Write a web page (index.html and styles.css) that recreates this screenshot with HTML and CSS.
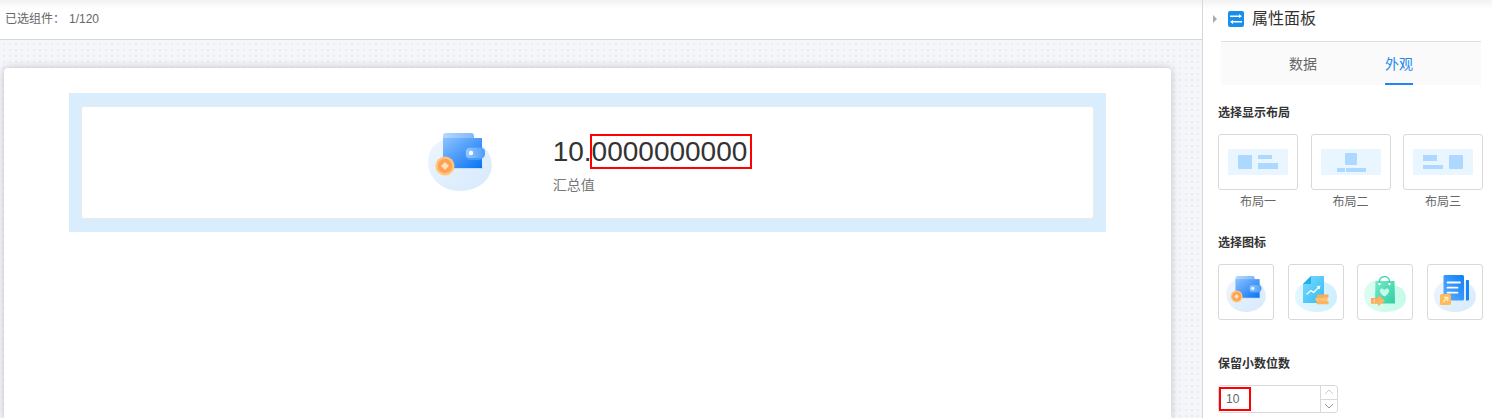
FILE: index.html
```html
<!DOCTYPE html>
<html lang="zh-CN">
<head>
    <meta charset="UTF-8">
    <meta name="viewport" content="width=device-width, initial-scale=1.0">
    <title>属性面板</title>
    <link rel="stylesheet" href="styles.css">
</head>
<body>

    <!-- shared icon shapes -->
    <svg class="defs" width="0" height="0" aria-hidden="true">
        <defs>
            <linearGradient id="blob-blue" x1="0" y1="0" x2="1" y2="1">
                <stop offset="0" stop-color="#eff6fe"/>
                <stop offset="1" stop-color="#d5e9fc"/>
            </linearGradient>
            <linearGradient id="blob-cyan" x1="0" y1="0" x2="1" y2="0">
                <stop offset="0" stop-color="#e3f7fe"/>
                <stop offset="1" stop-color="#cdeffe"/>
            </linearGradient>
            <linearGradient id="blob-green" x1="0" y1="0" x2="1" y2="0">
                <stop offset="0" stop-color="#dcfcf2"/>
                <stop offset="1" stop-color="#c5fbe8"/>
            </linearGradient>
            <linearGradient id="blue" x1="0" y1="0" x2="1" y2="1">
                <stop offset="0" stop-color="#8cc2ff"/>
                <stop offset="1" stop-color="#0873f4"/>
            </linearGradient>
            <linearGradient id="flap" x1="0" y1="0" x2="1" y2="0">
                <stop offset="0" stop-color="#b4d8ff"/>
                <stop offset="1" stop-color="#7fb8fb"/>
            </linearGradient>
            <linearGradient id="strap" x1="0" y1="0" x2="1" y2="0">
                <stop offset="0" stop-color="#98c9ff"/>
                <stop offset="1" stop-color="#4c9cf8"/>
            </linearGradient>
            <linearGradient id="cyan" x1="0" y1="0" x2="1" y2="1">
                <stop offset="0" stop-color="#7bdcff"/>
                <stop offset="1" stop-color="#36b9f5"/>
            </linearGradient>
            <linearGradient id="green" x1="0" y1="0" x2="1" y2="1">
                <stop offset="0" stop-color="#76e8c8"/>
                <stop offset="1" stop-color="#30cfa3"/>
            </linearGradient>
            <linearGradient id="paper" x1="1" y1="0" x2="0" y2="1">
                <stop offset="0" stop-color="#0a80fc"/>
                <stop offset="1" stop-color="#65aefc"/>
            </linearGradient>
            <linearGradient id="orange" x1="0" y1="0" x2="1" y2="1">
                <stop offset="0" stop-color="#ff9f55"/>
                <stop offset="1" stop-color="#ffc06b"/>
            </linearGradient>
        </defs>

        <symbol id="icon-wallet" viewBox="0 0 64 58">
            <path fill="url(#blob-blue)" d="M0 29C0 15 9 7 22 5C38 3 53 8 60 19C64 26 65 34 62 41C57 52 45 58 31 58C13 58 0 44 0 29Z"/>
            <path fill="url(#flap)" d="M15 10V3Q15 0 18 0H43Q46 0 46 3V10Z"/>
            <path fill="#9ecbfb" opacity=".5" d="M15 34H55V36H15Z"/>
            <path fill="url(#blue)" d="M15 5H54V35H15Z"/>
            <rect x="37" y="14" width="19" height="13" rx="5" fill="#5ea9fa" opacity=".6"/>
            <rect x="38" y="15" width="19" height="10" rx="4" fill="url(#strap)"/>
            <circle cx="43" cy="20" r="2.2" fill="#fff"/>
            <circle cx="17" cy="33" r="9.5" fill="#ffc57b"/>
            <circle cx="17" cy="33" r="7.2" fill="#ffa153"/>
            <path fill="#ffe0bc" d="M17 29L21 33L17 37L13 33Z"/>
        </symbol>

        <symbol id="icon-report" viewBox="0 0 42 36">
            <path fill="url(#blob-cyan)" d="M0 21C0 10 10 4 22 5C33 5 42 11 42 21C42 30 33 36 22 36C10 36 0 30 0 21Z"/>
            <path fill="url(#cyan)" d="M16 0H29V27H8V8Z"/>
            <path fill="#22aee9" d="M16 0V8H8Z"/>
            <path fill="none" stroke="#fff" stroke-width="1.2" stroke-linecap="round" stroke-linejoin="round" d="M12 18L16 14.500L18.500 16.500L24 11"/>
            <path fill="#fff" d="M21.500 10.500L25.500 9.500L24.500 13.500Z"/>
            <rect x="22" y="18.500" width="11.500" height="3.200" rx=".6" fill="#ffab52"/>
            <rect x="20.500" y="21.700" width="12" height="3.200" rx=".6" fill="#ffc173"/>
            <rect x="21.500" y="24.900" width="12" height="3.400" rx=".6" fill="#ffb45d"/>
        </symbol>

        <symbol id="icon-bag" viewBox="0 0 42 36">
            <path fill="url(#blob-green)" d="M0 19C0 10 6 4 15 4C23 4 26 8 33 10C39 12 42 17 42 22C42 31 33 36 21 36C8 36 0 29 0 19Z"/>
            <path fill="url(#green)" d="M11.500 5H30.500L31 27.500H11Z"/>
            <path fill="none" stroke="#3dcea8" stroke-width="1.300" d="M15.500 8V5.500C15.500 -1 25.500 -1 25.500 5.500V8"/>
            <circle cx="15.500" cy="8" r="1.200" fill="#fff"/>
            <circle cx="25.500" cy="8" r="1.200" fill="#fff"/>
            <path fill="#c3fbea" d="M20.500 20.500C12.500 15.500 16.500 9.500 20.500 14C24.500 9.500 28.500 15.500 20.500 20.500Z"/>
            <path fill="url(#orange)" d="M7 22H14V19L21 24.800L14 30.500V27.800H7Z"/>
            <path fill="#ffd9ae" d="M9.500 23.500H10.800V26.300H9.500Z"/>
        </symbol>

        <symbol id="icon-order" viewBox="0 0 42 36">
            <path fill="url(#blob-blue)" d="M0 19C0 9 10 3 21 4C34 4 42 11 42 20C42 30 32 36 21 36C8 36 0 29 0 19Z"/>
            <rect x="9.500" y="-1" width="20.500" height="25.500" rx="1.500" fill="url(#paper)"/>
            <path fill="#1685fa" d="M32 4H34Q35 4 35 5V23.500Q35 24.500 34 24.500H32Z"/>
            <path fill="none" stroke="#fff" stroke-width="1.800" stroke-linecap="round" d="M13.500 6.500H26M13.500 11.700H23.500M13.500 16.700H23.500"/>
            <rect x="6" y="18" width="11" height="11" rx="1.500" fill="#ffbb55"/>
            <path fill="none" stroke="#fff1d8" stroke-width="1.200" d="M9 26L13.500 21.500M10 21.300H13.800V25.200"/>
        </symbol>
    </svg>

    <div class="app">
        <main class="workspace">
            <header class="toolbar">
                <span>已选组件：</span>
                <span>1/120</span>
            </header>

            <div class="canvas">
                <div class="sheet">
                    <section class="widget">
                        <div class="card">
                            <svg class="card-icon"><use href="#icon-wallet"/></svg>
                            <div class="card-body">
                                <div class="card-value">10.<span class="mark">0000000000</span></div>
                                <div class="card-label">汇总值</div>
                            </div>
                        </div>
                    </section>
                </div>
            </div>
        </main>

        <aside class="panel">
            <header class="panel-head">
                <button class="collapse" type="button" aria-label="收起"></button>
                <svg class="panel-icon" viewBox="0 0 16 16">
                    <rect width="16" height="16" rx="2" fill="#168eea"/>
                    <path fill="#fff" d="M2 4.500H11V3L14 5.200L11 7V6H2ZM14 11.500H5V13L2 10.800L5 9V10H14Z"/>
                </svg>
                <h1>属性面板</h1>
            </header>

            <nav class="tabs">
                <button class="tab" type="button">数据</button>
                <button class="tab active" type="button">外观</button>
            </nav>

            <fieldset class="group">
                <legend>选择显示布局</legend>
                <div class="options">
                    <label class="option">
                        <input type="radio" name="layout" value="1">
                        <span class="tile tile-wide">
                            <svg class="layout" viewBox="0 0 60 26">
                                <rect width="60" height="26" rx="1" fill="#e9f5ff"/>
                                <g fill="#add8ff">
                                    <rect x="10" y="6" width="14" height="14" rx="1"/>
                                    <rect x="30" y="6" width="14" height="4"/>
                                    <rect x="30" y="14" width="20" height="6"/>
                                </g>
                            </svg>
                        </span>
                        布局一
                    </label>
                    <label class="option">
                        <input type="radio" name="layout" value="2">
                        <span class="tile tile-wide">
                            <svg class="layout" viewBox="0 0 60 26">
                                <rect width="60" height="26" rx="1" fill="#e9f5ff"/>
                                <g fill="#add8ff">
                                    <rect x="24" y="4" width="12" height="12" rx="1"/>
                                    <rect x="16" y="19" width="8" height="4"/>
                                    <rect x="25" y="19" width="20" height="4"/>
                                </g>
                            </svg>
                        </span>
                        布局二
                    </label>
                    <label class="option">
                        <input type="radio" name="layout" value="3">
                        <span class="tile tile-wide">
                            <svg class="layout" viewBox="0 0 60 26">
                                <rect width="60" height="26" rx="1" fill="#e9f5ff"/>
                                <g fill="#add8ff">
                                    <rect x="10" y="6" width="14" height="6"/>
                                    <rect x="10" y="16" width="20" height="4"/>
                                    <rect x="36" y="6" width="14" height="14" rx="1"/>
                                </g>
                            </svg>
                        </span>
                        布局三
                    </label>
                </div>
            </fieldset>

            <fieldset class="group group-icons">
                <legend>选择图标</legend>
                <div class="options">
                    <label class="option">
                        <input type="radio" name="icon" value="wallet" aria-label="wallet">
                        <span class="tile"><svg class="picto"><use href="#icon-wallet"/></svg></span>
                    </label>
                    <label class="option">
                        <input type="radio" name="icon" value="report" aria-label="report">
                        <span class="tile"><svg class="picto"><use href="#icon-report"/></svg></span>
                    </label>
                    <label class="option">
                        <input type="radio" name="icon" value="bag" aria-label="bag">
                        <span class="tile"><svg class="picto"><use href="#icon-bag"/></svg></span>
                    </label>
                    <label class="option">
                        <input type="radio" name="icon" value="order" aria-label="order">
                        <span class="tile"><svg class="picto"><use href="#icon-order" overflow="visible"/></svg></span>
                    </label>
                </div>
            </fieldset>

            <div class="group group-number">
                <label class="group-title" for="digits">保留小数位数</label>
                <div class="stepper">
                    <input id="digits" type="number" value="10" min="0" max="10">
                    <div class="steps">
                        <button class="step" type="button" aria-label="增加" disabled>
                            <svg viewBox="0 0 10 6"><path d="M1 5L5 1L9 5"/></svg>
                        </button>
                        <button class="step" type="button" aria-label="减少">
                            <svg viewBox="0 0 10 6"><path d="M1 1L5 5L9 1"/></svg>
                        </button>
                    </div>
                </div>
            </div>
        </aside>
    </div>

</body>
</html>
```
FILE: styles.css
```css
*,
*::after {
    box-sizing: border-box;
}

body {
    margin: 0;
    font-family: "Liberation Sans", "Noto Sans CJK SC", sans-serif;
    font-size: 12px;
    line-height: 20px;
    color: #666;
    background: #fff;
}

button {
    padding: 0;
    border: 0;
    background: none;
    font: inherit;
    color: inherit;
    cursor: pointer;
}

svg {
    display: block;
}

symbol {
    overflow: visible;
}

.defs {
    position: absolute;
}

.app {
    display: flex;
    min-height: 100vh;
}

/* left side */
.workspace {
    flex: 1;
    display: flex;
    flex-direction: column;
    min-width: 0;
}

.toolbar {
    display: flex;
    gap: 4px;
    height: 40px;
    padding: 9px 5px;
    border-bottom: 1px solid #d5d9d9;
    background: linear-gradient(#f2f2f2, #fff 9px);
}

.canvas {
    flex: 1;
    display: flex;
    padding: 28px 31px 0 4px;
    background: radial-gradient(circle at 4px 4px, #e9ebef 1px, transparent 1px) 0 0 / 6px 6px #f4f6fa;
    overflow: hidden;
}

.sheet {
    flex: 1;
    padding: 25px 65px;
    background: #fff;
    border-radius: 4px 4px 0 0;
    box-shadow: 0 0 8px rgba(0, 0, 0, 0.22);
}

.widget {
    padding: 13px 12px;
    background: #d9edfc;
}

.card {
    display: flex;
    justify-content: center;
    gap: 61px;
    height: 113px;
    padding-top: 26px;
    background: #fff;
    border: 1px solid #e6ebf0;
    border-radius: 3px;
}

.card-icon {
    width: 64px;
    height: 58px;
}

.card-value {
    font-size: 28px;
    line-height: 38px;
    color: #333;
}

.card-label {
    margin-top: 4px;
    font-size: 14px;
    color: #777;
}

.mark {
    position: relative;
}

.mark::after,
.stepper::after {
    content: "";
    position: absolute;
    border: 2px solid #f00;
    pointer-events: none;
}

.mark::after {
    inset: -2px -5px -2px -2px;
}

/* right side */
.panel {
    width: 290px;
    padding: 0 9px 5px 15px;
    border-left: 1px solid #d5d9d9;
    background: linear-gradient(#f2f2f2, #fff 9px);
}

.panel-head {
    display: flex;
    align-items: center;
    height: 41px;
    margin-left: -5px;
    padding-bottom: 3px;
}

.panel-head h1 {
    margin: 0 0 0 8px;
    font-size: 16px;
    line-height: 22px;
    font-weight: normal;
    color: #333;
}

.collapse {
    border: 4px solid transparent;
    border-left-color: #aaa;
    border-right-width: 0;
}

.panel-icon {
    width: 16px;
    height: 16px;
    margin-left: 11px;
}

.tabs {
    display: flex;
    justify-content: center;
    gap: 68px;
    height: 44px;
    margin: 0 2px 0 3px;
    border-top: 1px solid #e0e0e0;
    background: #fafafa;
}

.tab {
    border-bottom: 2px solid transparent;
    padding-top: 2px;
    font-size: 14px;
}

.tab.active {
    color: #1e88f0;
    border-bottom-color: #1e88f0;
}

.group {
    margin: 18px 0 0;
    padding: 0;
    border: 0;
}

.group legend,
.group-title {
    display: block;
    padding: 0;
    font-weight: bold;
    color: #333;
}

.options {
    display: flex;
    justify-content: space-between;
    padding-top: 11px;
}

.option {
    text-align: center;
    cursor: pointer;
}

.option input {
    position: absolute;
    opacity: 0;
    pointer-events: none;
}

.tile {
    display: flex;
    align-items: center;
    justify-content: center;
    width: 56px;
    height: 56px;
    margin-bottom: 2px;
    border: 1px solid #d9d9d9;
    border-radius: 3px;
}

.tile-wide {
    width: 80px;
}

.layout {
    width: 60px;
    height: 26px;
}

.picto {
    width: 42px;
    height: 36px;
    margin-top: 4px;
    overflow: visible;
}

.group-icons {
    margin-top: 21px;
}

.group-number {
    margin-top: 32px;
}

.stepper {
    position: relative;
    display: flex;
    width: 120px;
    height: 28px;
    margin-top: 11px;
    border: 1px solid #d9d9d9;
    border-radius: 3px;
}

.stepper::after {
    top: 1px;
    left: 0;
    width: 32px;
    height: 24px;
}

.stepper input {
    flex: 1;
    min-width: 0;
    padding: 0 7px;
    border: 0;
    background: none;
    font: inherit;
    color: #666;
    appearance: textfield;
}

.stepper input::-webkit-inner-spin-button {
    appearance: none;
}

.steps {
    display: flex;
    flex-direction: column;
    width: 17px;
    border-left: 1px solid #d9d9d9;
}

.step {
    flex: 1;
    display: flex;
    align-items: center;
    justify-content: center;
}

.step + .step {
    border-top: 1px solid #d9d9d9;
}

.step svg {
    width: 10px;
    height: 6px;
    fill: none;
    stroke: #999;
}

.step:disabled svg {
    stroke: #ccc;
}
```
